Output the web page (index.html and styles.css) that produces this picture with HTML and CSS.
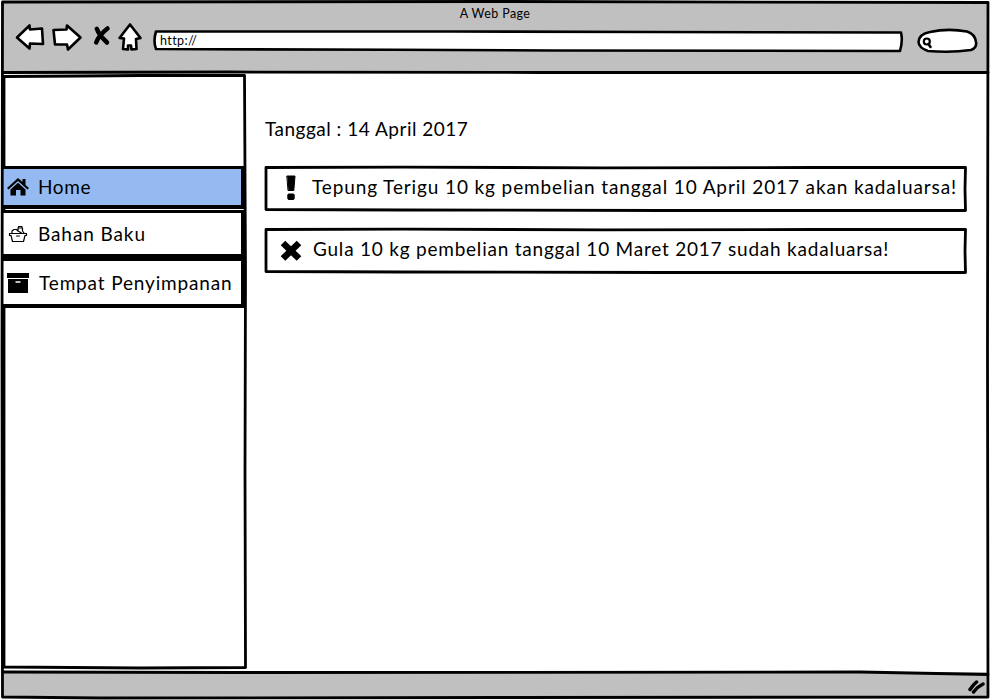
FILE: index.html
```
<!DOCTYPE html>
<html lang="id">
<head>
<meta charset="utf-8">
<title>A Web Page</title>
<link rel="stylesheet" href="styles.css">
</head>
<body>
<div class="window">
  <header class="chrome">
    <div class="title"><span>A Web Page</span></div>
    <div class="toolbar">
      <svg class="nav" width="130" height="34" viewBox="14 20 130 34">
        <path d="M17 37.500 L29.500 25.500 L30 29.500 L42 28.500 L43 44 L30 43.500 L29.500 48.500 Z"/>
        <path d="M53.500 30 L66.500 29.500 L67 25.500 L80.500 37.500 L68 49.500 L67 44.500 L55 44.500 Z"/>
        <path class="thick" d="M96.800 28.800 Q99 35 107 42.500 M107.500 28.500 Q99 35 96.200 42.500"/>
        <path d="M130 24.500 L140.500 38 L136 39 L136.500 49 L131.500 49.500 L131 45.500 L128 45.500 L128 49.500 L123 49 L124 38.500 L119.500 38 Z"/>
      </svg>
      <div class="address">
        <svg class="frame" viewBox="0 0 750 24"><path class="paper" d="M3 2.500 L300 2.500 L500 3 L748 3.500 Q750 12 747 22 L400 21.500 L240 20.800 L3 20 Q0 12 3 2.500 Z"/></svg>
        <span>http://</span>
      </div>
      <svg class="search" width="64" height="28" viewBox="915 27 64 28">
        <path d="M930 32 Q948 28 967 31.500 Q975 34 976 42 Q977 48 971 50 Q951 53 928 51 Q919 48 918.500 42 Q919 34 930 32 Z"/>
        <circle cx="926.800" cy="41.500" r="3"/><path d="M928.500 44 L930.500 47"/>
      </svg>
    </div>
  </header>
  <div class="content">
    <nav class="sidebar">
      <svg class="frame" viewBox="0 0 245 600"><path d="M4 4.500 L80 4 L140 3.500 L244.500 3.500 L245.500 200 L245 400 L245.500 595.500 L140 596 L4 595 L4 300 Z"/></svg>
      <a class="item home">
        <svg class="icon" width="22" height="20" viewBox="0 0 22 20"><path d="M11 1 L15.500 5 L15.500 2 L18.500 2 L18.500 8 L22 11 L20.500 12.500 L11 4 L1.500 12.500 L0 11 Z"/><path d="M11 5.800 L18.500 12.500 V18.500 H13.500 V13 H9 V18.500 H3.500 V12.500 Z"/></svg>
        <span>Home</span>
      </a>
      <a class="item stock">
        <svg class="icon line" width="22" height="20" viewBox="0 0 22 20"><path d="M2.500 9.500 H19.500 V11.500 H18 L16.500 17.500 H5.500 L4 11.500 H2.500 Z M5 9 V7 L7 5.500 H9.500 L11 7 L14.500 9 M11 7 V4 H15.500 V7 L17 9 M11.500 4 V2.500 H15 V4 M9.500 12 H12.500"/></svg>
        <span>Bahan Baku</span>
      </a>
      <a class="item storage">
        <svg class="icon" width="22" height="20" viewBox="0 0 22 20"><path d="M0 0 H22 V5 H0 Z M1 6 H21 V20 H1 Z M8.500 8.200 V9.800 H13.500 V8.200 Z" fill-rule="evenodd"/></svg>
        <span>Tempat Penyimpanan</span>
      </a>
    </nav>
    <main class="main">
      <p class="date"><span>Tanggal : 14 April 2017</span></p>
      <div class="alert expiring">
        <svg class="frame" viewBox="0 0 704 48"><path d="M3 3.500 L140 3.200 L340 3.800 L550 3.500 L702.500 3.500 L702 25 L702.500 46.500 L400 46.500 L140 46 L3 45.500 Z"/></svg>
        <svg class="icon" width="24" height="26" viewBox="0 0 24 26"><path d="M8.200 1 H16 L14.800 15.500 H9.400 Z"/><rect x="8.800" y="19" width="6.400" height="5.500" rx="1"/></svg>
        <span>Tepung Terigu 10 kg pembelian tanggal 10 April 2017 akan kadaluarsa!</span>
      </div>
      <div class="alert expired">
        <svg class="frame" viewBox="0 0 704 48"><path d="M3 3.500 L140 3.200 L340 3.800 L550 3.500 L702.500 3.500 L702 25 L702.500 46.500 L400 46.500 L140 46 L3 45.500 Z"/></svg>
        <svg class="icon" width="24" height="26" viewBox="0 0 24 26"><path class="cross" d="M4 6 L20 21.500 M20 6 L4 21.500"/></svg>
        <span>Gula 10 kg pembelian tanggal 10 Maret 2017 sudah kadaluarsa!</span>
      </div>
    </main>
  </div>
  <footer class="status">
    <svg width="20" height="16" viewBox="0 0 20 16"><path d="M3 11.500 Q6 7 9.500 4 M6.500 14 Q10 9 16 6"/></svg>
  </footer>
  <svg class="frame" viewBox="0 0 990 700">
    <path d="M2.500 2 L500 1.500 L988 2.500 L987.500 350 L988 697 L500 697.500 L100 698 L2.500 697 L2 350 Z"/>
    <path d="M3 72.500 L230 72 L540 72.500 L988 72.500 M3 672 L240 672.500 L860 672 L988 674.500"/>
  </svg>
</div>
</body>
</html>
```
FILE: styles.css
```
* { box-sizing: border-box; }
body { margin: 0; background: #fff; color: #000; font: 19px/24px Lato, "Open Sans", sans-serif; }
.window { position: relative; width: 990px; height: 700px; display: flex; flex-direction: column; overflow: hidden; padding: 1px 2px 2px; }
.frame { position: absolute; inset: 0; width: 100%; height: 100%; pointer-events: none; overflow: visible; }
svg path, svg circle { fill: none; stroke: #000; stroke-width: 2.8; stroke-linejoin: round; stroke-linecap: round; }
.chrome { height: 71px; background: #c0c0c0; }
.title { height: 24px; text-align: center; font-size: 12.5px; letter-spacing: .4px; }
.title span { position: relative; top: 1px; }
.toolbar { display: flex; padding-left: 12px; height: 34px; margin-top: -5px; }
svg.nav path, svg.search path, svg .paper { fill: #fff; stroke-width: 2.6; }
svg.nav .thick { fill: none; stroke-width: 4.5; }
svg.search circle { stroke-width: 2.2; }
.address { position: relative; width: 750px; height: 24px; margin: 9px 12px 0 9px; padding-left: 7px; font-size: 12.5px; line-height: 23px; letter-spacing: .4px; }
.address span { position: relative; }
.search { margin-top: 7px; }
.content { display: flex; flex: 1; min-height: 0; }
.sidebar { position: relative; width: 245px; padding-top: 94px; margin-left: -2px; }
.item { position: relative; display: flex; align-items: center; width: 243px; margin-left: 2px; padding-left: 4px; border: solid #000; border-width: 3px 4px 4px 1px; background: #fff; white-space: nowrap; }
.item .icon { margin-right: 9px; flex: none; }
.item .icon path { fill: #000; stroke: none; }
.item .icon.line path { fill: none; stroke: #000; stroke-width: 1.2; }
.home { height: 43px; background: #94baf1; letter-spacing: .6px; }
.stock { height: 48px; margin-top: 1px; letter-spacing: .9px; }
.storage { height: 50px; letter-spacing: .85px; }
.storage .icon { margin-right: 10px; }
.main { flex: 1; padding: 45px 0 0 18px; }
.date { margin: 0 0 23px 2px; letter-spacing: .5px; }
.alert { position: relative; display: flex; align-items: center; width: 704px; height: 48px; padding-left: 16px; margin-bottom: 14px; white-space: nowrap; }
.alert .icon { margin-right: 9px; }
.alert .icon path, .alert .icon rect { fill: #000; stroke: #000; stroke-width: 1; }
.alert .icon .cross { stroke-width: 6.5; stroke-linecap: butt; }
.alert span { padding-bottom: 2px; }
.expiring span { letter-spacing: .88px; }
.expired span { padding-left: 1px; letter-spacing: .78px; }
.status { display: flex; justify-content: flex-end; height: 26px; padding: 6px 1px 0 0; background: #c0c0c0; }
.status path { stroke-width: 3.5; }
```
